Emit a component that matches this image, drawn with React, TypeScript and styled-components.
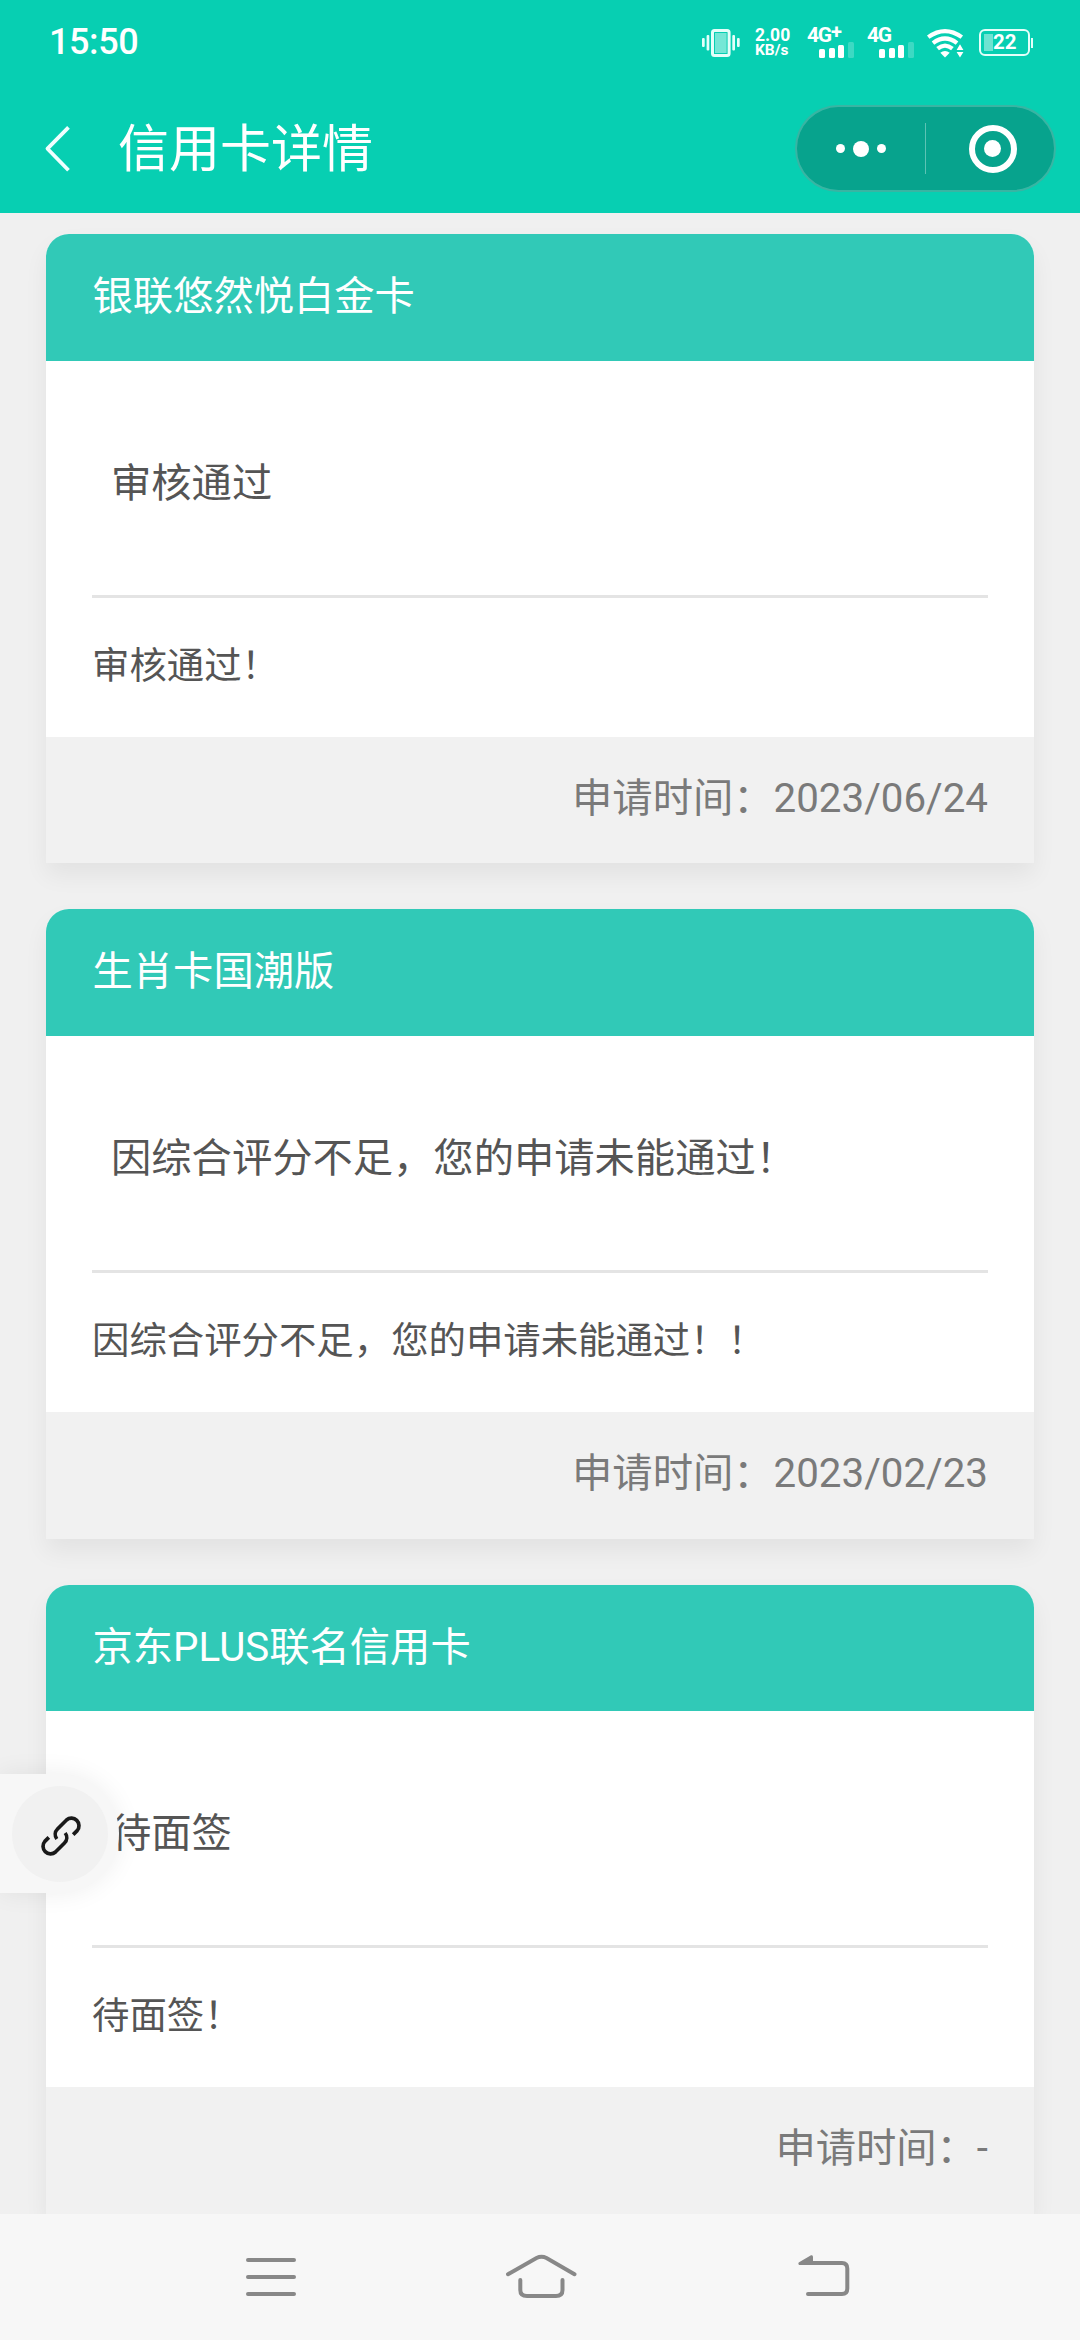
import React from "react";
import styled, { createGlobalStyle } from "styled-components";

const GlobalStyle = createGlobalStyle`
  * { box-sizing: border-box; }
  body { margin: 0; background: #f0f0f0; }
`;

const Screen = styled.div`
  position: relative;
  display: flex;
  flex-direction: column;
  width: 1080px;
  height: 2340px;
  overflow: hidden;
  background: #f0f0f0;
  font-family: Roboto, "Noto Sans CJK SC", sans-serif;
`;

const TopBar = styled.header`
  flex: none;
  display: flex;
  flex-direction: column;
  height: 213px;
  background: #07cfb2;
  color: #fff;
`;

const StatusBar = styled.div`
  display: flex;
  align-items: center;
  justify-content: space-between;
  height: 84px;
  padding: 0 47px 0 49px;
`;

const Clock = styled.span`
  font-size: 36px;
  font-weight: 500;
  line-height: 42px;
  letter-spacing: -0.4px;
`;

const StatusIcons = styled.div`
  display: flex;
  align-items: center;
  height: 30px;
  margin-top: 1px;
`;

const Speed = styled.div`
  display: flex;
  flex-direction: column;
  width: 36px;
  margin: 0 16px 0 15px;
  font-weight: 700;
`;

const SpeedValue = styled.span`
  font-size: 17.5px;
  line-height: 15px;
`;

const SpeedUnit = styled.span`
  font-size: 15.5px;
  line-height: 15px;
`;

const Signal = styled.div`
  display: flex;
  flex-direction: column;
  justify-content: space-between;
  width: 60px;
  height: 30px;
`;

const SignalLabel = styled.span`
  display: flex;
  height: 14px;
  font-size: 21px;
  font-weight: 700;
  line-height: 15px;
  letter-spacing: -1.2px;
`;

const SignalPlus = styled.span`
  font-size: 20px;
  line-height: 9px;
`;

const SignalBars = styled.div`
  display: flex;
  align-items: flex-end;
  gap: 3.6px;
  padding-left: 12px;
  height: 16px;
`;

const Bar = styled.i<{ $height: number; $dim?: boolean }>`
  width: 6px;
  height: ${(p) => p.$height}px;
  border-radius: 1.5px;
  background: #fff;
  opacity: ${(p) => (p.$dim ? 0.22 : 1)};
`;

const Battery = styled.div`
  display: flex;
  align-items: center;
  width: 54px;
  margin-left: 15px;
`;

const BatteryBody = styled.div`
  display: flex;
  align-items: center;
  width: 51px;
  height: 27px;
  padding-left: 12px;
  border: 2px solid #e4fffa;
  border-radius: 6px;
  background: linear-gradient(rgba(255, 255, 255, 0.42), rgba(255, 255, 255, 0.42)) 3px 3px / 9px 17px no-repeat;
  font-size: 20.5px;
  font-weight: 700;
  line-height: 23px;
`;

const BatteryTip = styled.div`
  width: 2px;
  height: 10px;
  margin-left: 1px;
  background: #e4fffa;
`;

const NavBar = styled.div`
  display: flex;
  align-items: center;
  height: 129px;
  padding: 0 24px 0 43px;
`;

const NavTitle = styled.h1`
  flex: 1;
  margin: 2px 0 0 45px;
  font-size: 51px;
  font-weight: 400;
  line-height: 70px;
`;

const Capsule = styled.div`
  display: flex;
  align-items: center;
  width: 261px;
  height: 87px;
  border: 2px solid rgba(255, 255, 255, 0.2);
  border-radius: 44px;
  background: #07a38d;
`;

const CapsuleHalf = styled.div`
  flex: 1;
  display: flex;
  align-items: center;
  justify-content: center;
  gap: 8px;
`;

const Dot = styled.i<{ $size: number }>`
  width: ${(p) => p.$size}px;
  height: ${(p) => p.$size}px;
  border-radius: 50%;
  background: #fff;
`;

const CapsuleRule = styled.div`
  width: 1px;
  height: 51px;
  background: rgba(255, 255, 255, 0.35);
`;

const Ring = styled.div`
  display: flex;
  align-items: center;
  justify-content: center;
  width: 48px;
  height: 48px;
  margin-left: 5px;
  border: 6.5px solid #fff;
  border-radius: 50%;
`;

const Content = styled.main`
  flex: 1;
  min-height: 0;
  display: flex;
  flex-direction: column;
  gap: 46px;
  padding: 21px 46px 0;
  overflow: hidden;
`;

const Card = styled.section`
  flex: none;
  border-radius: 23px 23px 0 0;
  background: #fff;
  box-shadow: 0 12px 24px rgba(0, 0, 0, 0.06);
`;

const CardTitle = styled.h2`
  height: 126.7px;
  margin: 0;
  padding: 0 46.5px;
  border-radius: 23px 23px 0 0;
  background: #31c9b7;
  color: #fff;
  font-size: 40.3px;
  font-weight: 400;
  line-height: 125px;
`;

const CardBody = styled.div`
  height: 376px;
  padding: 0 46px;
  color: #555;
`;

const Status = styled.div`
  height: 237px;
  padding-left: 19px;
  border-bottom: 3px solid #e4e4e4;
  font-size: 40.3px;
  line-height: 245px;
  white-space: nowrap;
`;

const Detail = styled.div`
  font-size: 37.4px;
  line-height: 137px;
  white-space: nowrap;
`;

const CardFooter = styled.div`
  height: 126.6px;
  padding: 0 46px;
  background: #f1f1f1;
  color: #7a7a7a;
  font-size: 40.3px;
  line-height: 124px;
  text-align: right;
`;

const SystemNav = styled.nav`
  flex: none;
  display: flex;
  align-items: center;
  justify-content: space-between;
  height: 126px;
  padding: 0 228px 0 243px;
  background: #f7f7f7;
`;

const FloatTab = styled.div`
  position: absolute;
  left: 0;
  top: 1774px;
  display: flex;
  align-items: center;
  width: 119px;
  height: 119px;
  padding-left: 12px;
  border-radius: 0 60px 60px 0;
  background: #f7f7f7;
  box-shadow: 0 0 26px rgba(0, 0, 0, 0.07);
`;

const FloatButton = styled.div`
  display: flex;
  align-items: center;
  justify-content: center;
  width: 96px;
  height: 96px;
  padding: 5px 0 0 2px;
  border-radius: 50%;
  background: #f1f1f1;
`;

const VibrateIcon = () => (
  <svg width="38" height="30" viewBox="702 27 38 30" fill="#e4fffa">
    <rect x="712.5" y="29.5" width="16.6" height="25" rx="2" fill="none" stroke="#e4fffa" strokeWidth="3" />
    <rect x="715" y="32" width="11.6" height="20" opacity="0.5" />
    <rect x="702" y="37" width="2.7" height="9" rx="1" />
    <rect x="706.6" y="34" width="2.7" height="15.5" rx="1" />
    <rect x="732.3" y="34" width="2.7" height="15.5" rx="1" />
    <rect x="737" y="37" width="2.7" height="9" rx="1" />
  </svg>
);

const WifiIcon = () => (
  <svg width="37" height="30" viewBox="927 27.5 37 30" fill="none" stroke="#fff" strokeWidth="4.2">
    <path d="M928.2 36.6Q945 24.6 961.8 36.6" />
    <path d="M933 42.6Q945 33.4 957 42.6" />
    <path d="M937.6 48.2Q945 42 952.4 48.2" />
    <path d="M940.3 52.2Q945 49 949.7 52.2L945 57Z" fill="#fff" stroke="none" />
    <path d="M956.6 49.4L960 43.8L963.4 49.4ZM956.6 51.4H963.4L960 57Z" fill="#fff" stroke="none" />
  </svg>
);

const BackIcon = () => (
  <svg width="30" height="50" viewBox="43 124 30 50" fill="none" stroke="#f0ffff" strokeWidth="3.8" strokeLinejoin="round">
    <path d="M68.5 127.3L47.5 148.7L68.5 170.3" />
  </svg>
);

const LinkIcon = () => (
  <svg width="42" height="42" viewBox="29.5 45 126 126" fill="none" stroke="#191919" strokeWidth="11">
    <path d="M129 104L141 92A22.7 22.7 0 0 0 109 60L82 87A22.7 22.7 0 0 0 80 117" />
    <path d="M56 112L44 124A22.7 22.7 0 0 0 76 156L103 129A22.7 22.7 0 0 0 105 99" />
  </svg>
);

const MenuIcon = () => (
  <svg width="56" height="46" viewBox="243 2254 56 46" stroke="#888" strokeWidth="4" strokeLinecap="round">
    <path d="M248 2260H294M248 2277H294M248 2294H294" />
  </svg>
);

const HomeIcon = () => (
  <svg width="76" height="50" viewBox="509.5 2252 76 50" fill="none" stroke="#888" strokeWidth="4" strokeLinecap="round">
    <path d="M507.5 2274.2L536 2258Q541 2255.7 546 2258L574 2274.2" />
    <path d="M519.8 2280V2290Q519.8 2296 526.5 2296H555.5Q562 2296 562 2290V2280" />
  </svg>
);

const HomeSlot = styled.div`
  display: flex;
  svg {
    overflow: visible;
  }
`;

const ReturnIcon = () => (
  <svg width="56" height="46" viewBox="796 2254 56 46" fill="none" stroke="#888" strokeWidth="4" strokeLinecap="round">
    <path d="M803 2263H842Q847.3 2263 847.3 2268.5V2288.5Q847.3 2294 842 2294H808" />
    <path d="M799 2265Q797.5 2263 799.5 2262L811 2255.3Q813 2254.6 813 2257V2265Z" fill="#888" stroke="none" />
  </svg>
);

const MobileSignal = ({ plus }: { plus?: boolean }) => (
  <Signal>
    <SignalLabel>4G{plus && <SignalPlus>+</SignalPlus>}</SignalLabel>
    <SignalBars>
      <Bar $height={9} />
      <Bar $height={10} />
      <Bar $height={13} />
      <Bar $height={16} $dim />
    </SignalBars>
  </Signal>
);

const applications = [
  { name: "银联悠然悦白金卡", status: "审核通过", detail: "审核通过！", date: "2023/06/24" },
  {
    name: "生肖卡国潮版",
    status: "因综合评分不足，您的申请未能通过！",
    detail: "因综合评分不足，您的申请未能通过！！",
    date: "2023/02/23",
  },
  { name: "京东PLUS联名信用卡", status: "待面签", detail: "待面签！", date: "-" },
];

export default function App() {
  return (
    <Screen lang="zh-CN">
      <GlobalStyle />
      <TopBar>
        <StatusBar>
          <Clock>15:50</Clock>
          <StatusIcons>
            <VibrateIcon />
            <Speed>
              <SpeedValue>2.00</SpeedValue>
              <SpeedUnit>KB/s</SpeedUnit>
            </Speed>
            <MobileSignal plus />
            <MobileSignal />
            <WifiIcon />
            <Battery>
              <BatteryBody>22</BatteryBody>
              <BatteryTip />
            </Battery>
          </StatusIcons>
        </StatusBar>
        <NavBar>
          <BackIcon />
          <NavTitle>信用卡详情</NavTitle>
          <Capsule>
            <CapsuleHalf>
              <Dot $size={9} />
              <Dot $size={16} />
              <Dot $size={9} />
            </CapsuleHalf>
            <CapsuleRule />
            <CapsuleHalf>
              <Ring>
                <Dot $size={17} />
              </Ring>
            </CapsuleHalf>
          </Capsule>
        </NavBar>
      </TopBar>
      <Content>
        {applications.map((item) => (
          <Card key={item.name}>
            <CardTitle>{item.name}</CardTitle>
            <CardBody>
              <Status>{item.status}</Status>
              <Detail>{item.detail}</Detail>
            </CardBody>
            <CardFooter>申请时间：{item.date}</CardFooter>
          </Card>
        ))}
      </Content>
      <SystemNav>
        <MenuIcon />
        <HomeSlot>
          <HomeIcon />
        </HomeSlot>
        <ReturnIcon />
      </SystemNav>
      <FloatTab>
        <FloatButton>
          <LinkIcon />
        </FloatButton>
      </FloatTab>
    </Screen>
  );
}
